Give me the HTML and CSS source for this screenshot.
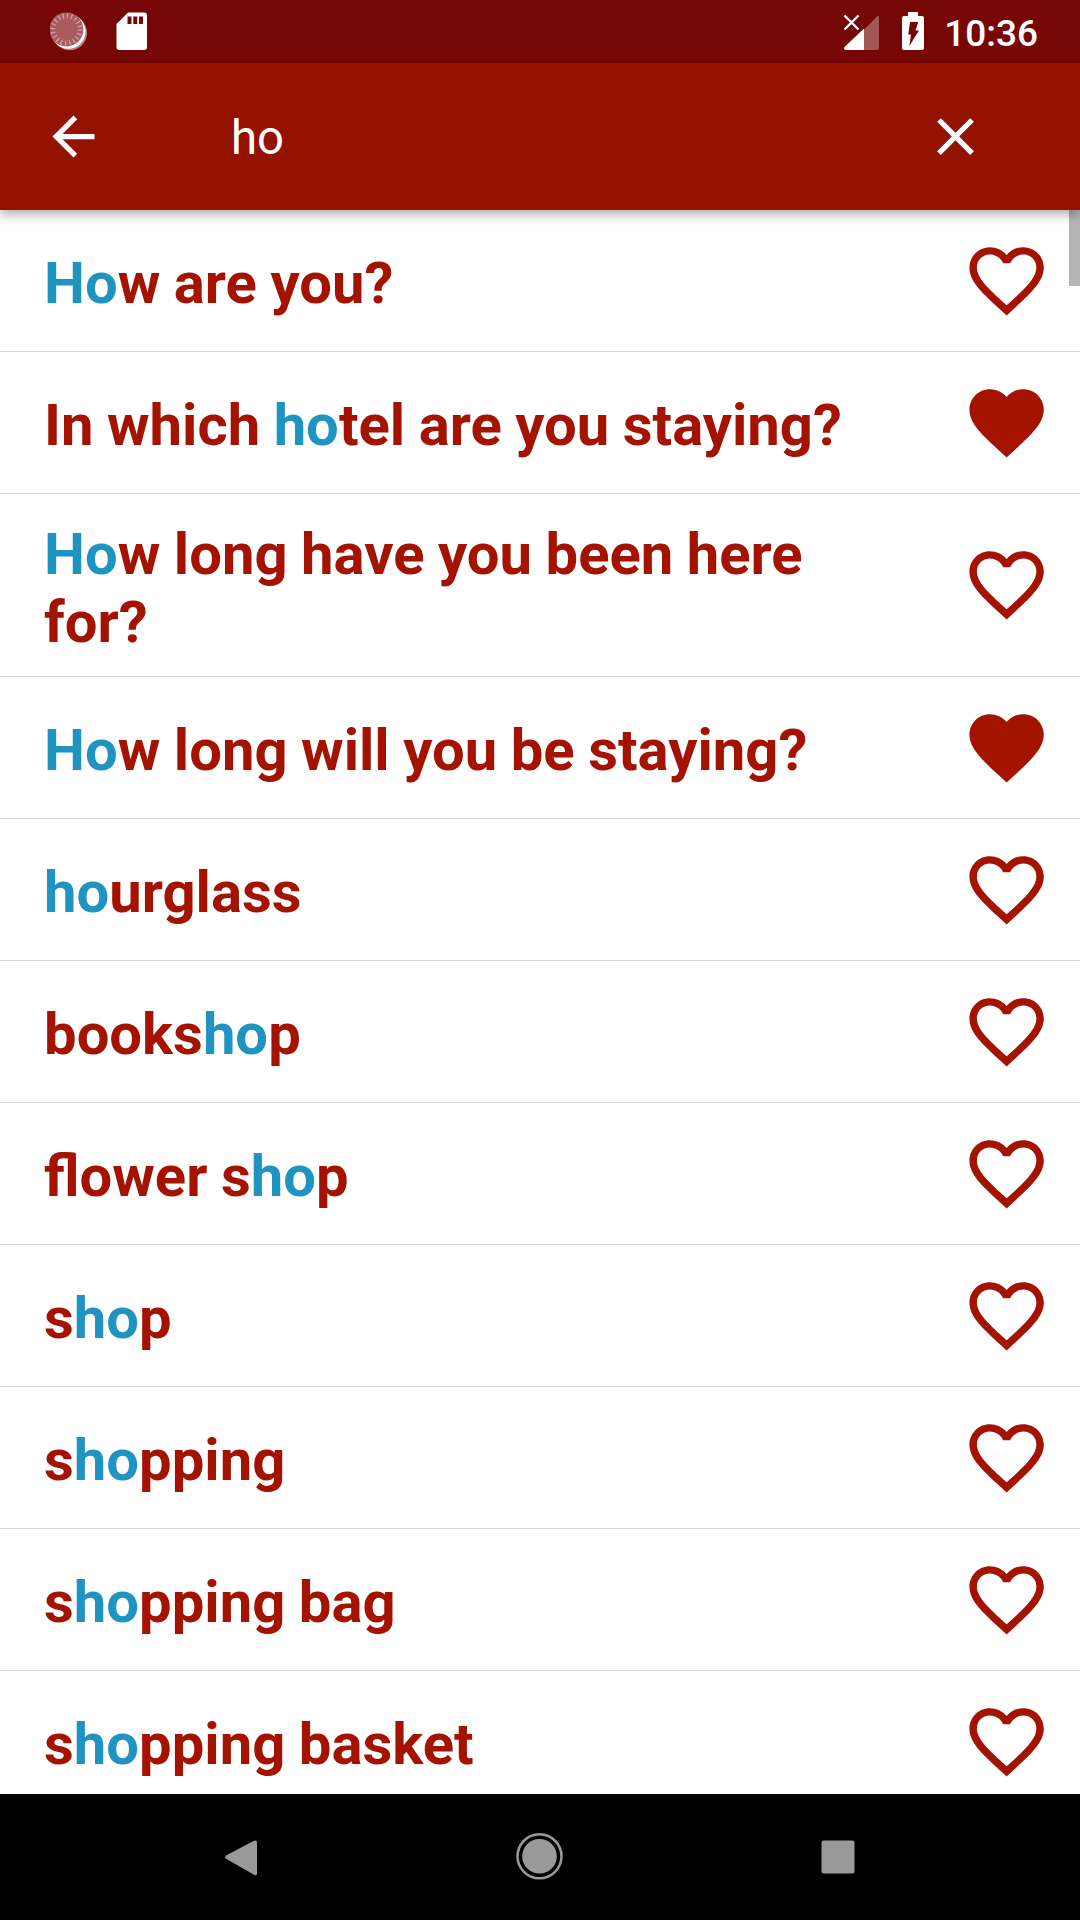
FILE: index.html
```html
<!DOCTYPE html>
<html lang="en">
<head>
<meta charset="utf-8">
<title>Phrase search</title>
<link rel="stylesheet" href="styles.css">
</head>
<body>
<svg class="defs" aria-hidden="true">
  <symbol id="heart-outline" viewBox="0 0 24 24"><path d="M16.5 3c-1.74 0-3.41.81-4.5 2.09C10.91 3.81 9.24 3 7.5 3 4.42 3 2 5.42 2 8.5c0 3.78 3.4 6.86 8.55 11.54L12 21.35l1.45-1.32C18.6 15.36 22 12.28 22 8.5 22 5.42 19.58 3 16.5 3zm-4.4 15.55l-.1.1-.1-.1C7.14 14.24 4 11.39 4 8.5 4 6.5 5.5 5 7.5 5c1.54 0 3.04.99 3.57 2.36h1.87C13.46 5.99 14.96 5 16.5 5c2 0 3.5 1.5 3.5 3.5 0 2.89-3.14 5.74-7.9 10.05z"/></symbol>
  <symbol id="heart-filled" viewBox="0 0 24 24"><path d="M12 21.35l-1.45-1.32C5.4 15.36 2 12.28 2 8.5 2 5.42 4.42 3 7.5 3c1.74 0 3.41.81 4.5 2.09C13.09 3.81 14.76 3 16.5 3 19.58 3 22 5.42 22 8.5c0 3.78-3.4 6.86-8.55 11.54L12 21.35z"/></symbol>
</svg>
<div class="screen">
  <header class="status">
    <svg class="status-left" width="110" height="63" viewBox="0 0 110 63">
      <circle cx="19.800" cy="33" r="17.300" fill="#b98080"/>
      <circle cx="18.300" cy="31.500" r="17.300" fill="#fff"/>
      <circle cx="16.400" cy="29.400" r="17" fill="#a85a5d"/>
      <circle cx="16.400" cy="29.400" r="13.600" fill="none" stroke="#cfa3a3" stroke-width="5" stroke-dasharray="1.3 2.973"/>
      <path d="M78 12.600h16a3 3 0 0 1 3 3V47a3 3 0 0 1-3 3H69.500a3 3 0 0 1-3-3V24z" fill="#fff"/>
      <path d="M77.500 16.500h4v7.500h-4zM83.300 16.500h4v7.500h-4zM89 16.500h4v7.500h-4z" fill="#770606"/>
    </svg>
    <div class="status-right">
      <svg width="94" height="63" viewBox="0 0 94 63">
        <path d="M24 29.500L37 16.500q2-2 2 1V48a2 2 0 0 1-2 2H24z" fill="#a45556"/>
        <path d="M24 28.500V50H6q-3-.5-1.500-3z" fill="#fff"/>
        <path d="M4.500 15.500l14 14M18.500 15.500l-14 14" stroke="#fff" stroke-width="2.300"/>
        <path d="M68 12h10v4h4a2 2 0 0 1 2 2v30a2 2 0 0 1-2 2H64a2 2 0 0 1-2-2V18a2 2 0 0 1 2-2h4z" fill="#fff"/>
        <path d="M70 22h8.300l-2.800 8.500H79L69.300 46l1.700-11.500h-2.700z" fill="#770606"/>
      </svg>
      <span class="clock">10:36</span>
    </div>
  </header>
  <div class="appbar">
    <svg class="back" width="63" height="63" viewBox="0 0 24 24"><path d="M20 11H7.830l5.590-5.590L12 4l-8 8 8 8 1.410-1.410L7.830 13H20v-2z"/></svg>
    <span class="query">ho</span>
    <svg class="clear" width="63" height="63" viewBox="0 0 24 24"><path d="M19 6.410L17.590 5 12 10.590 6.410 5 5 6.410 10.590 12 5 17.590 6.410 19 12 13.410 17.590 19 19 17.590 13.410 12z"/></svg>
  </div>
  <main class="list">
    <div class="row"><p class="phrase"><b>Ho</b>w are you?</p><svg class="heart"><use href="#heart-outline"/></svg></div>
    <div class="row"><p class="phrase">In which <b>ho</b>tel are you staying?</p><svg class="heart"><use href="#heart-filled"/></svg></div>
    <div class="row"><p class="phrase"><b>Ho</b>w long have you been here for?</p><svg class="heart"><use href="#heart-outline"/></svg></div>
    <div class="row"><p class="phrase"><b>Ho</b>w long will you be staying?</p><svg class="heart"><use href="#heart-filled"/></svg></div>
    <div class="row"><p class="phrase"><b>ho</b>urglass</p><svg class="heart"><use href="#heart-outline"/></svg></div>
    <div class="row"><p class="phrase">books<b>ho</b>p</p><svg class="heart"><use href="#heart-outline"/></svg></div>
    <div class="row"><p class="phrase">flower s<b>ho</b>p</p><svg class="heart"><use href="#heart-outline"/></svg></div>
    <div class="row"><p class="phrase">s<b>ho</b>p</p><svg class="heart"><use href="#heart-outline"/></svg></div>
    <div class="row"><p class="phrase">s<b>ho</b>pping</p><svg class="heart"><use href="#heart-outline"/></svg></div>
    <div class="row"><p class="phrase">s<b>ho</b>pping bag</p><svg class="heart"><use href="#heart-outline"/></svg></div>
    <div class="row"><p class="phrase">s<b>ho</b>pping basket</p><svg class="heart"><use href="#heart-outline"/></svg></div>
    <div class="scrollbar"></div>
  </main>
  <nav class="navbar">
    <svg width="48" height="48" viewBox="0 0 48 48"><path d="M9.500 22.300L37 7.800q3-1 3 1.700v31q0 2.700-3 1.200L9.500 26q-3-1.800 0-3.700z"/></svg>
    <svg width="48" height="48" viewBox="0 0 48 48"><circle cx="23.500" cy="23.300" r="17.300"/><circle class="ring" cx="23.500" cy="23.300" r="22"/></svg>
    <svg width="48" height="48" viewBox="0 0 48 48"><rect x="7.500" y="7.500" width="33" height="33" rx="2"/></svg>
  </nav>
</div>
</body>
</html>
```

FILE: styles.css
```css
* { box-sizing: border-box; }
body { margin: 0; background: #fff; font-family: Roboto, "Liberation Sans", sans-serif; }
.defs { position: absolute; width: 0; height: 0; }
.screen { display: flex; flex-direction: column; width: 1080px; height: 1920px; overflow: hidden; }
svg { display: block; flex: none; }

.status { display: flex; justify-content: space-between; height: 63px; padding: 0 42px 0 50px; background: #770606; }
.status-right { display: flex; align-items: center; gap: 8px; }
.clock { width: 96px; padding-top: 4px; color: #fff; font-size: 37px; font-weight: 500; line-height: 44px; text-align: right; }

.appbar { position: relative; z-index: 1; display: flex; align-items: center; height: 147px; padding: 0 93px 0 42px; background: #931300; box-shadow: 0 5px 10px rgba(0, 0, 0, .3); color: #fff; }
.appbar svg { fill: #fff; }
.query { flex: 1; padding: 3px 0 0 126px; font-size: 47.25px; line-height: 56px; }

.list { position: relative; flex: 1; min-height: 0; overflow: hidden; }
.row { display: flex; align-items: center; justify-content: space-between; min-height: 142px; padding: 0 29px 0 44px; border-bottom: 1px solid #d8d8d8; }
.phrase { width: 850px; margin: 0; padding: 25.7px 0 20.3px; color: #a31300; font-size: 58px; font-weight: 700; line-height: 68px; word-spacing: -.9px; }
.phrase b { color: #2094c1; font-weight: inherit; }
.heart { width: 89.25px; height: 89.25px; fill: #a31300; }
.scrollbar { position: absolute; top: 0; right: 0; width: 11px; height: 76px; background: #b5b5b5; }

.navbar { display: flex; justify-content: space-between; align-items: center; height: 126px; padding: 0 218px 0 217px; background: #000; }
.navbar svg { overflow: visible; fill: #999; }
.navbar .ring { fill: none; stroke: #999; stroke-width: 2.5; }
```
